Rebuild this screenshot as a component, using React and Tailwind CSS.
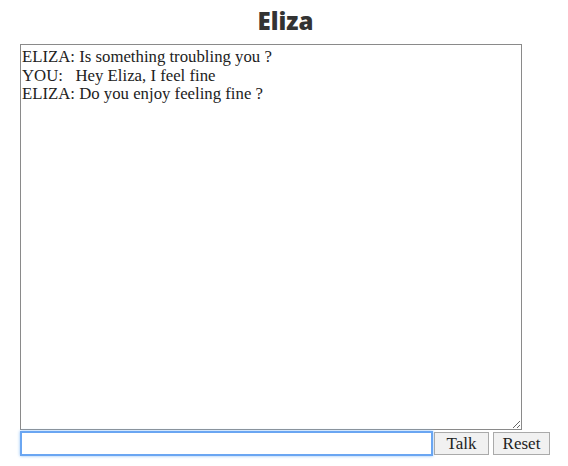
import { useState } from "react";

export default function App() {
  const [log] = useState(
    "ELIZA: Is something troubling you ?\nYOU:   Hey Eliza, I feel fine\nELIZA: Do you enjoy feeling fine ?"
  );
  const [text, setText] = useState("");

  return (
    <div className="w-[568px] h-[466px] bg-white font-['Liberation_Serif',serif]">
      <h1 className="text-center text-[24px] leading-[30px] font-extrabold text-[#333] pt-[6px] pl-[3px] font-['Open_Sans',sans-serif]">
        Eliza
      </h1>
      <div className="pl-[20px] pt-[8px]">
        <textarea
          readOnly
          value={log}
          className="block w-[502px] h-[386px] border border-[#8a8a8a] px-[1px] py-[3px] text-[16.75px] leading-[18.5px] text-[#222] resize font-['Liberation_Serif',serif]"
        />
        <div className="flex items-start">
          <input
            autoFocus
            value={text}
            onChange={(e) => setText(e.target.value)}
            className="w-[413px] h-[25px] mt-[1px] border-2 border-[#6aa6f2] shadow-[0_0_3px_#8fc0f7] outline-none px-1 text-[16px] font-['Liberation_Serif',serif]"
          />
          <button className="ml-[1px] mt-[2px] w-[55px] h-[23px] border border-[#aaa] bg-[#f1f1f1] text-[17px] leading-[20px] text-[#222] font-['Liberation_Serif',serif]">
            Talk
          </button>
          <button className="ml-[4px] mt-[2px] w-[57px] h-[23px] border border-[#aaa] bg-[#f1f1f1] text-[17px] leading-[20px] text-[#222] font-['Liberation_Serif',serif]">
            Reset
          </button>
        </div>
      </div>
    </div>
  );
}
